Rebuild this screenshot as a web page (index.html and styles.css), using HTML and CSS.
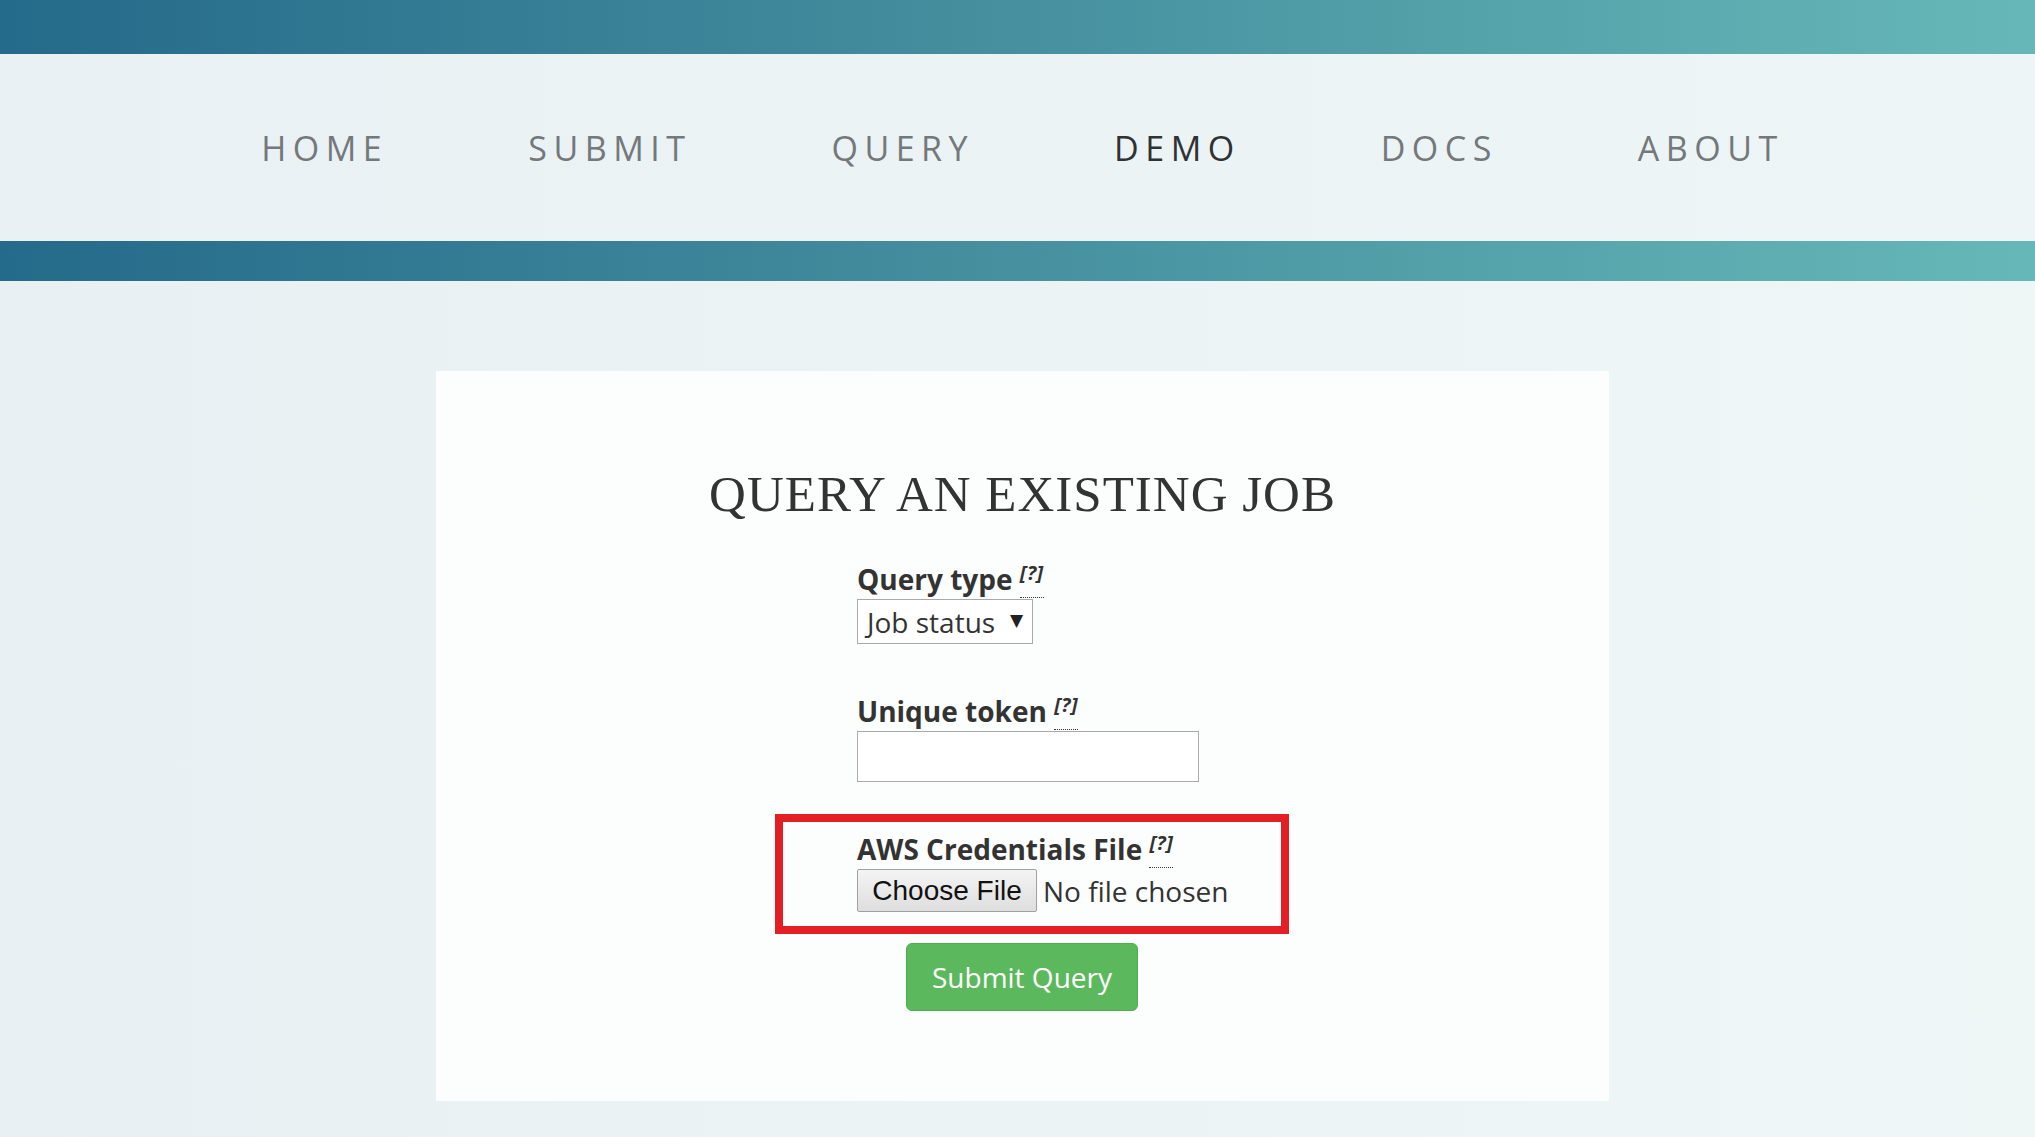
FILE: index.html
```html
<!DOCTYPE html>
<html lang="en">
<head>
<meta charset="utf-8">
<title>Query an existing job</title>
<link rel="stylesheet" href="styles.css">
</head>
<body>
<div class="topbar"></div>
<nav class="nav">
  <a class="nav-item" href="#">HOME</a>
  <a class="nav-item" href="#">SUBMIT</a>
  <a class="nav-item" href="#">QUERY</a>
  <a class="nav-item active" href="#">DEMO</a>
  <a class="nav-item" href="#">DOCS</a>
  <a class="nav-item" href="#">ABOUT</a>
</nav>
<div class="band"></div>
<main class="page">
  <section class="card">
    <h1 class="title">QUERY AN EXISTING JOB</h1>
    <form class="form">
      <div class="group">
        <div class="label">Query type <abbr class="help" title="Type of query">[?]</abbr></div>
        <div class="select"><span>Job status</span><span class="caret">&#9660;</span></div>
      </div>
      <div class="group">
        <div class="label">Unique token <abbr class="help" title="Token of the job">[?]</abbr></div>
        <input class="text-input" type="text">
      </div>
      <div class="group">
        <div class="label">AWS Credentials File <abbr class="help" title="Credentials file">[?]</abbr></div>
        <div class="file-row"><span class="file-btn">Choose File</span><span class="file-name">No file chosen</span></div>
      </div>
      <div class="submit-row"><button class="submit" type="button">Submit Query</button></div>
    </form>
    <div class="highlight"></div>
  </section>
</main>
</body>
</html>
```

FILE: styles.css
```css
html, body {
  margin: 0;
  padding: 0;
}
body {
  width: 2035px;
  min-height: 1137px;
  background: linear-gradient(to right, #e8f0f3, #eef6f6);
  font-family: "Open Sans", "DejaVu Sans", sans-serif;
  color: #333;
  overflow: hidden;
}
.topbar {
  height: 54px;
  background: linear-gradient(to right, #246a8a, #46909f 50%, #66b8b8);
}
.nav {
  height: 187px;
  box-sizing: border-box;
  padding-top: 71px;
  padding-left: 10px;
  display: flex;
  justify-content: center;
  gap: 140px;
  background: linear-gradient(to right, #e9f1f4, #edf5f6);
}
.nav-item {
  font-family: "Open Sans", sans-serif;
  font-size: 34px;
  line-height: 46px;
  letter-spacing: 6.5px;
  color: #74787a;
  text-decoration: none;
}
.nav-item.active {
  color: #2f3133;
}
.band {
  height: 40px;
  background: linear-gradient(to right, #246a8a, #46909f 50%, #66b8b8);
}
.page {
  padding-top: 90px;
}
.card {
  position: relative;
  margin-left: 436px;
  width: 1173px;
  height: 730px;
  box-sizing: border-box;
  padding-top: 95px;
  background: #fcfdfd;
}
.title {
  margin: 0;
  text-align: center;
  font-family: "Liberation Serif", serif;
  font-weight: normal;
  font-size: 51px;
  line-height: 56px;
  letter-spacing: 1px;
  color: #333;
}
.form {
  margin-top: 39px;
  padding-left: 421px;
}
.group {
  margin-bottom: 49px;
}
.group:nth-child(3) {
  margin-bottom: 31px;
}
.label {
  font-size: 28px;
  font-weight: bold;
  line-height: 36px;
  height: 36px;
  color: #333;
  white-space: nowrap;
}
.help {
  display: inline-block;
  vertical-align: top;
  font-size: 20px;
  font-style: italic;
  font-weight: bold;
  letter-spacing: 0.5px;
  line-height: 20px;
  padding-top: 2px;
  padding-bottom: 14px;
  text-decoration: none;
  border-bottom: 1px dotted #333;
}
.select {
  margin-top: 2px;
  width: 176px;
  height: 45px;
  box-sizing: border-box;
  border: 1px solid #a9a9a9;
  background: #fff;
  display: flex;
  align-items: center;
  justify-content: space-between;
  padding: 0 9px 0 9px;
  font-size: 28px;
  color: #333;
}
.caret {
  font-family: "DejaVu Sans", sans-serif;
  font-size: 17px;
  color: #222;
  margin-top: -4px;
}
.text-input {
  display: block;
  margin: 2px 0 0 0;
  width: 342px;
  height: 51px;
  box-sizing: border-box;
  border: 1px solid #aaa;
  background: #fff;
  padding: 0 8px;
  font-size: 24px;
  font-family: "Open Sans", sans-serif;
}
.file-row {
  margin-top: 2px;
  display: flex;
  align-items: center;
  gap: 6px;
  height: 43px;
}
.file-btn {
  box-sizing: border-box;
  width: 180px;
  height: 43px;
  border: 1px solid #a0a0a0;
  border-radius: 2px;
  background: linear-gradient(#f4f4f4, #dedede);
  font-family: "Liberation Sans", Arial, sans-serif;
  font-size: 28px;
  line-height: 41px;
  text-align: center;
  color: #111;
}
.file-name {
  font-size: 28px;
  color: #333;
}
.submit-row {
  display: flex;
  padding-left: 49px;
}
.submit {
  width: 232px;
  height: 68px;
  border: 1px solid #4cae4c;
  border-radius: 6px;
  background: #5cb85c;
  color: #fff;
  font-family: "Open Sans", sans-serif;
  font-size: 28px;
  padding: 0;
}
.highlight {
  position: absolute;
  left: 339px;
  top: 443px;
  width: 514px;
  height: 120px;
  box-sizing: border-box;
  border: 8px solid #e31e25;
  pointer-events: none;
}
```
